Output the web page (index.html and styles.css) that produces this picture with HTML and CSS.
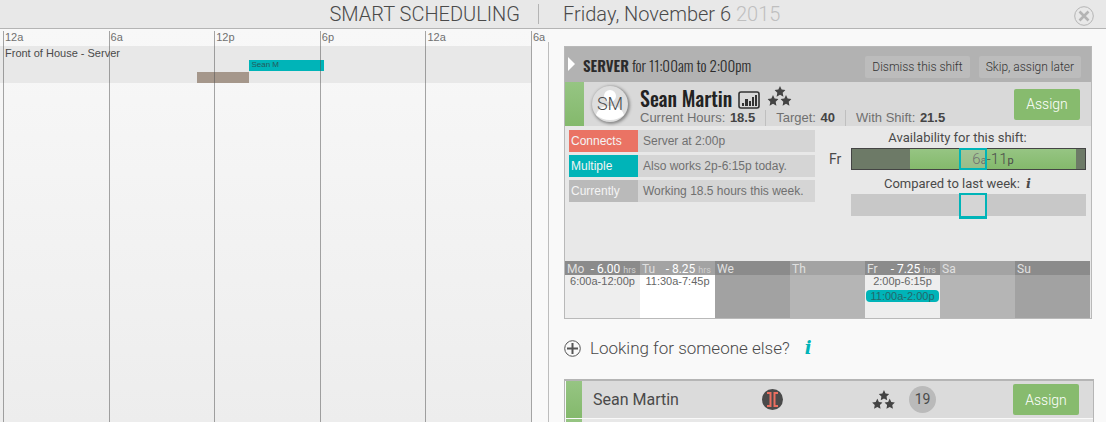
FILE: index.html
```html
<!DOCTYPE html>
<html lang="en">
<head>
    <meta charset="utf-8">
    <title>Smart Scheduling</title>
    <meta name="viewport" content="width=device-width, initial-scale=1">
    <link rel="stylesheet" href="styles.css">
</head>
<body>
    <svg class="defs" aria-hidden="true">
        <symbol id="star" viewBox="0 0 20 20">
            <path d="M10 0l3 6.500 7 .9-5.100 4.900 1.300 7.100L10 16l-6.200 3.400 1.300-7.100L0 7.400l7-.9z"/>
        </symbol>
        <symbol id="stars" viewBox="0 0 24 21">
            <use href="#star" x="7" y="0" width="11" height="11"/>
            <use href="#star" x="0" y="9" width="11" height="11"/>
            <use href="#star" x="13" y="9" width="11" height="11"/>
        </symbol>
    </svg>

    <header class="topbar">
        <h1 class="title">SMART SCHEDULING</h1>
        <div class="date">Friday, November 6 <span class="year">2015</span></div>
        <button class="close" aria-label="Close">
            <svg viewBox="0 0 20 20" width="20" height="20">
                <circle cx="10" cy="10" r="9.300" fill="none" stroke="#b4b4b4"/>
                <path d="M5.500 5.500l9 9M14.500 5.500l-9 9" stroke="#b4b4b4" stroke-width="2.600"/>
            </svg>
        </button>
    </header>

    <main class="content">
        <section class="timeline">
            <div class="hours">
                <div class="hour">12a</div>
                <div class="hour">6a</div>
                <div class="hour">12p</div>
                <div class="hour">6p</div>
                <div class="hour">12a</div>
                <div class="hour">6a</div>
            </div>
            <div class="group">
                <div class="group-name">Front of House - Server</div>
                <!-- one column for each quarter of an hour -->
                <div class="shifts">
                    <div class="shift assigned" style="grid-column: 57 / 74">Sean M</div>
                    <div class="shift open" style="grid-column: 45 / 57"></div>
                </div>
            </div>
        </section>

        <section class="detail">
            <div class="card">
                <div class="card-head">
                    <span class="arrow"></span>
                    <h2 class="shift-title"><b>SERVER</b> for 11:00am to 2:00pm</h2>
                    <button class="btn-grey">Dismiss this shift</button>
                    <button class="btn-grey">Skip, assign later</button>
                </div>

                <div class="person">
                    <div class="stripe"></div>
                    <div class="avatar">
                        <svg viewBox="0 0 36 36" width="36" height="36">
                            <circle cx="18" cy="10" r="6" fill="#fff"/>
                            <path d="M4 29q2-7 10-9h8q8 2 10 9-6 5-14 5T4 29z" fill="#fff"/>
                        </svg>
                        <span class="initials">SM</span>
                    </div>
                    <div class="person-info">
                        <div class="name-line">
                            <h3 class="name">Sean Martin</h3>
                            <svg class="chart" viewBox="0 0 22 18" width="22" height="18">
                                <rect x="1" y="1" width="20" height="16" rx="2" fill="none" stroke="#333" stroke-width="1.600"/>
                                <path d="M4 12h2v3H4zM7 8h3v7H7zM11 10h2v5h-2zM14 6h2v9h-2zM17 4h2v11h-2z" fill="#333"/>
                            </svg>
                            <svg class="stars" width="25" height="21"><use href="#stars"/></svg>
                        </div>
                        <div class="stats">
                            <span class="stat">Current Hours: <b>18.5</b></span>
                            <span class="stat">Target: <b>40</b></span>
                            <span class="stat">With Shift: <b>21.5</b></span>
                        </div>
                    </div>
                    <button class="btn-assign">Assign</button>
                </div>

                <div class="info">
                    <div class="notes">
                        <div class="note"><span class="tag connects">Connects</span><span class="note-text">Server at 2:00p</span></div>
                        <div class="note"><span class="tag multiple">Multiple</span><span class="note-text">Also works 2p-6:15p today.</span></div>
                        <div class="note"><span class="tag currently">Currently</span><span class="note-text">Working 18.5 hours this week.</span></div>
                    </div>
                    <div class="avail">
                        <div class="avail-title">Availability for this shift:</div>
                        <div class="avail-row">
                            <span class="avail-day">Fr</span>
                            <div class="bar bar-day">
                                <div class="free" style="margin-left: 25%; width: 71%">6<small>a</small>-11<small>p</small></div>
                                <span class="marker" style="left: 46%; width: 12%"></span>
                            </div>
                        </div>
                        <div class="avail-title">Compared to last week: <i class="info-i">i</i></div>
                        <div class="avail-row">
                            <span class="avail-day"></span>
                            <div class="bar bar-week">
                                <span class="marker tall" style="left: 46%; width: 12%"></span>
                            </div>
                        </div>
                    </div>
                </div>

                <div class="week">
                    <div class="day works">
                        <div class="day-head">Mo <span class="hrs">- 6.00 <small>hrs</small></span></div>
                        <div class="slot">6:00a-12:00p</div>
                    </div>
                    <div class="day works">
                        <div class="day-head">Tu <span class="hrs">- 8.25 <small>hrs</small></span></div>
                        <div class="slot">11:30a-7:45p</div>
                    </div>
                    <div class="day"><div class="day-head">We</div></div>
                    <div class="day"><div class="day-head">Th</div></div>
                    <div class="day works">
                        <div class="day-head">Fr <span class="hrs">- 7.25 <small>hrs</small></span></div>
                        <div class="slot">2:00p-6:15p</div>
                        <div class="slot new">11:00a-2:00p</div>
                    </div>
                    <div class="day"><div class="day-head">Sa</div></div>
                    <div class="day"><div class="day-head">Su</div></div>
                </div>
            </div>

            <div class="looking">
                <button class="plus" aria-label="Show more people">
                    <svg viewBox="0 0 17 17" width="17" height="17">
                        <circle cx="8.500" cy="8.500" r="7.800" fill="none" stroke="#555"/>
                        <path d="M8.500 3v11M3 8.500h11" stroke="#555" stroke-width="2"/>
                    </svg>
                </button>
                <span class="looking-text">Looking for someone else?</span>
                <i class="info-i teal">i</i>
            </div>

            <div class="list">
                <div class="row">
                    <div class="stripe"></div>
                    <div class="row-name">Sean Martin</div>
                    <div class="row-link">
                        <svg viewBox="0 0 21 21" width="21" height="21">
                            <circle cx="10.500" cy="10.500" r="10.500" fill="#4a4a4a"/>
                            <path d="M5 4h3.500v13H5M16 4h-3.500v13H16" fill="none" stroke="#ea6f60" stroke-width="2"/>
                        </svg>
                    </div>
                    <svg class="stars" width="23" height="20"><use href="#stars"/></svg>
                    <div class="count">19</div>
                    <button class="btn-assign">Assign</button>
                </div>
                <div class="row next">
                    <div class="stripe"></div>
                </div>
            </div>
        </section>
    </main>
</body>
</html>
```
FILE: styles.css
```css
*{
    box-sizing: border-box;
}
body{
    margin: 0;
    height: 100vh;
    display: flex;
    flex-direction: column;
    overflow: hidden;
    background: #f9f9f9;
    color: #4a4a4a;
    font-family: "Helvetica Neue", "Liberation Sans", Arial, sans-serif;
    font-size: 12px;
}
h1, h2, h3{
    margin: 0;
    font-weight: normal;
}
button{
    border: 0;
    padding: 0;
    background: none;
    font-family: inherit;
    cursor: pointer;
}
svg{
    display: block;
}
.defs{
    display: none;
}
.title, .date, .initials, .btn-grey, .btn-assign, .looking-text{
    font-family: Roboto, sans-serif;
    font-weight: 300;
}

/* top bar */
.topbar{
    display: grid;
    grid-template-columns: 539fr 567fr;
    align-items: center;
    position: relative;
    height: 29px;
    flex-shrink: 0;
    background: #e8e8e8;
    border-bottom: 1px solid #b4b4b4;
}
.title, .date{
    font-size: 20px;
    line-height: 20px;
}
.title{
    text-align: right;
    padding-right: 18px;
    border-right: 1px solid #b4b4b4;
}
.date{
    padding-left: 24px;
}
.year{
    color: #bfbfbf;
}
.close{
    position: absolute;
    right: 12px;
    top: 6px;
}

.content{
    display: grid;
    grid-template-columns: 549fr 557fr;
    flex: 1;
    min-height: 0;
}

/* timeline */
.timeline{
    position: relative;
    padding: 2px 18px 0 3px;
    background: linear-gradient(#f8f8f8, #ededed);
}
.timeline::after{
    content: "";
    position: absolute;
    top: 13px;
    right: 0;
    bottom: 0;
    width: 17px;
    background: #f9f9f9;
    border-right: 1px solid #bdbdbd;
}
.hours{
    position: absolute;
    z-index: 1;
    top: 2px;
    bottom: 0;
    left: 3px;
    right: 18px;
    display: grid;
    grid-template-columns: repeat(5, 1fr) 0;
    pointer-events: none;
}
.hour{
    padding-left: 1px;
    border-left: 1px solid rgba(80, 80, 80, .5);
    font-size: 11px;
    line-height: 13px;
    color: #707070;
}
.group{
    margin: 15px 0 0 -3px;
    padding-left: 3px;
    height: 37px;
    background: #e8e8e8;
}
.group-name{
    padding-left: 2px;
    height: 14px;
    font-size: 11px;
    line-height: 15px;
}
.shifts{
    display: grid;
    grid-template-columns: repeat(120, 1fr);
    row-gap: 1px;
}
.shift{
    height: 11px;
    padding-left: 2px;
    font-size: 8px;
    line-height: 10px;
    white-space: nowrap;
}
.assigned{
    background: #00b4b8;
    color: #245a5c;
}
.open{
    background: #a5978b;
}

/* shift card */
.detail{
    padding: 17px 12px 0 15px;
    overflow: hidden;
}
.card{
    margin-right: 2px;
    background: #e8e8e8;
    border: 1px solid #b9b9b9;
}
.card-head{
    display: flex;
    align-items: center;
    height: 35px;
    padding: 4px 10px 0 3px;
    background: #b2b2b2;
}
.arrow{
    margin-top: -5px;
    border: 7px solid transparent;
    border-left-color: #fff;
    border-right: 0;
}
.shift-title{
    flex: 1;
    margin: -4px 0 0 8px;
    white-space: nowrap;
    font-family: Oswald, sans-serif;
    font-size: 15px;
    font-weight: 300;
    color: #2b2b2b;
}
.shift-title b{
    font-weight: 600;
}
.btn-grey{
    height: 22px;
    margin-left: 9px;
    padding: 0 7px;
    border-radius: 2px;
    background: #bcbcbc;
    color: #333;
    font-size: 12px;
}
.stripe{
    width: 19px;
    align-self: stretch;
    background: linear-gradient(#96c583, #84b96c);
}
.person{
    display: flex;
    align-items: center;
    height: 44px;
    padding-right: 11px;
    background: #d9d9d9;
}
.avatar{
    position: relative;
    width: 36px;
    height: 36px;
    margin: 0 12px 0 8px;
    border-radius: 50%;
    background: #dedede;
    box-shadow: 1px 1px 3px 1px #888;
}
.initials{
    position: absolute;
    inset: 0;
    text-align: center;
    font-size: 18px;
    line-height: 36px;
}
.person-info{
    flex: 1;
}
.name-line{
    display: flex;
    align-items: center;
    height: 28px;
}
.name{
    padding-top: 4px;
    font-family: Oswald, sans-serif;
    font-size: 20px;
    font-weight: 500;
    line-height: 24px;
    color: #222;
    white-space: nowrap;
}
.chart{
    margin: 7px 7px 0 6px;
}
.stars{
    fill: #444;
}
.stats{
    display: flex;
    height: 16px;
    font-size: 13px;
    line-height: 15px;
}
.stat{
    padding-right: 10px;
    margin-right: 10px;
    border-right: 1px solid #bfbfbf;
    color: #707070;
}
.stat:last-child{
    border: 0;
}
.stat b{
    margin-left: 1px;
    color: #444;
}
.btn-assign{
    width: 66px;
    height: 31px;
    border-radius: 2px;
    background: #87bb6e;
    color: #fff;
    font-size: 14px;
}

/* notes and availability */
.info{
    display: flex;
    gap: 14px;
    height: 135px;
    padding: 4px 5px 0 4px;
}
.notes{
    flex: 246;
}
.note{
    display: flex;
    height: 22px;
    margin-bottom: 3px;
    line-height: 22px;
    background: #d5d5d5;
    color: #707070;
}
.tag{
    width: 69px;
    margin-right: 5px;
    padding-left: 2px;
    color: #f4f4f4;
}
.connects{
    background: #ea7364;
}
.multiple{
    background: #00b4b8;
}
.currently{
    background: #bababa;
}
.avail{
    flex: 257;
    font-family: Roboto, sans-serif;
}
.avail-title{
    height: 18px;
    font-size: 13px;
    line-height: 16px;
    text-align: center;
}
.avail-row{
    display: flex;
    align-items: center;
    height: 22px;
    margin-bottom: 6px;
}
.avail-day{
    width: 22px;
    font-size: 14px;
}
.bar{
    position: relative;
    flex: 1;
    height: 22px;
}
.bar-day{
    border: 1px solid #444;
    background: #6d7a67;
}
.bar-week{
    background: #c8c8c8;
}
.free{
    height: 20px;
    text-align: center;
    font-size: 15px;
    font-weight: 300;
    line-height: 20px;
    background: linear-gradient(#96c583, #84b96c);
}
.free small{
    font-size: 11px;
    font-weight: 400;
}
.marker{
    position: absolute;
    top: -1px;
    bottom: -1px;
    border: 2px solid #00b4b8;
    background: rgba(200, 200, 200, .3);
}
.tall{
    bottom: -3px;
    border-bottom-width: 3px;
    background: #d5d5d5;
}
.info-i{
    margin-left: 3px;
    font-family: "DejaVu Serif", "Liberation Serif", serif;
    font-size: 13px;
    font-weight: bold;
    line-height: 16px;
}
.teal{
    color: #00b4b8;
    font-size: 18px;
}

/* week strip */
.week{
    display: grid;
    grid-template-columns: repeat(7, 1fr);
    height: 57px;
    padding-right: 1px;
}
.day{
    background: #b5b5b5;
}
.day:nth-child(odd){
    background: #a2a2a2;
}
.day.works:nth-child(odd){
    background: #eee;
}
.day.works:nth-child(even){
    background: #fff;
}
.day-head{
    display: flex;
    justify-content: space-between;
    height: 14px;
    padding: 0 4px 0 2px;
    font-family: Roboto, sans-serif;
    line-height: 16px;
    color: #e0e0e0;
    background: #a3a3a3;
}
.day:nth-child(odd) .day-head{
    background: #8b8b8b;
}
.hrs{
    color: #fff;
}
.hrs small{
    font-size: 9px;
    color: #d0d0d0;
}
.slot{
    height: 13px;
    margin: 0 1px;
    font-size: 11px;
    line-height: 13px;
    text-align: center;
    color: #666;
}
.new{
    height: 12px;
    margin-top: 2px;
    border-radius: 4px;
    line-height: 12px;
    background: #00b4b8;
    color: #24686a;
}

/* other people */
.looking{
    display: flex;
    align-items: center;
    height: 60px;
    padding-bottom: 2px;
}
.looking-text{
    margin: 0 12px 0 9px;
    font-size: 17px;
}
.list{
    border: 1px solid #b5b5b5;
    border-top-width: 2px;
    padding-left: 1px;
}
.row{
    display: flex;
    align-items: center;
    height: 37px;
    padding-right: 14px;
    background: #dbdbdb;
}
.row .stripe{
    width: 16px;
}
.row.next{
    margin-top: 1px;
    background: #e8e8e8;
}
.row-name{
    width: 35%;
    padding-left: 11px;
    font-family: Roboto, sans-serif;
    font-size: 16px;
}
.row-link{
    flex: 1;
}
.count{
    width: 27px;
    height: 27px;
    margin: 0 77px 0 14px;
    border-radius: 50%;
    background: #bababa;
    font-family: Roboto, sans-serif;
    font-size: 14px;
    line-height: 27px;
    text-align: center;
}
```
